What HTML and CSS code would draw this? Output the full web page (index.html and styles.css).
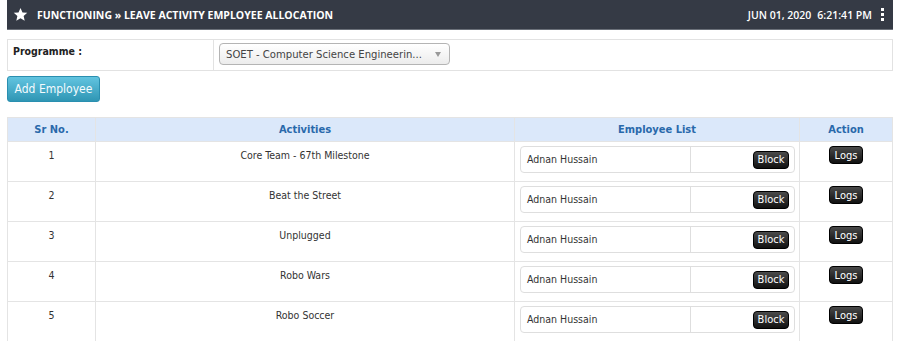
FILE: index.html
```html
<!DOCTYPE html>
<html lang="en">
<head>
    <meta charset="UTF-8">
    <title>Leave Activity Employee Allocation</title>
    <link rel="stylesheet" href="styles.css">
</head>
<body>
    <div class="topbar">
        <div class="title">
            <svg class="star" width="15" height="15" viewBox="0 0 24 24"><path d="M12 1.5l3.2 7.1 7.6.7-5.8 5.1 1.7 7.6L12 18l-6.7 4 1.7-7.6-5.8-5.1 7.6-.7z" fill="#fff"/></svg>
            <span>FUNCTIONING &raquo; LEAVE ACTIVITY EMPLOYEE ALLOCATION</span>
        </div>
        <div class="clock">
            <span>JUN 01, 2020</span>
            <span>6:21:41 PM</span>
            <span class="dots"><i></i><i></i><i></i></span>
        </div>
    </div>

    <div class="filter">
        <div class="filter-label">Programme :</div>
        <div class="filter-field">
            <div class="select">
                <span>SOET - Computer Science Engineerin...</span>
                <span class="caret"></span>
            </div>
        </div>
    </div>

    <button class="btn-add">Add Employee</button>

    <table class="grid">
        <thead>
            <tr>
                <th class="c-sr">Sr No.</th>
                <th class="c-act">Activities</th>
                <th class="c-emp">Employee List</th>
                <th class="c-action">Action</th>
            </tr>
        </thead>
        <tbody id="rows"></tbody>
    </table>

    <script>
        const activities = ["Core Team - 67th Milestone", "Beat the Street", "Unplugged", "Robo Wars", "Robo Soccer"];
        const tbody = document.getElementById('rows');
        activities.forEach((name, i) => {
            const tr = document.createElement('tr');
            tr.innerHTML = `
                <td class="c-sr">${i + 1}</td>
                <td class="c-act">${name}</td>
                <td class="c-emp">
                    <div class="emp-box">
                        <div class="emp-name">Adnan Hussain</div>
                        <div class="emp-btn"><button class="btn-dark btn-block">Block</button></div>
                    </div>
                </td>
                <td class="c-action"><button class="btn-dark">Logs</button></td>`;
            tbody.appendChild(tr);
        });
    </script>
</body>
</html>
```

FILE: styles.css
```css
body {
    margin: 0;
    padding: 0 7px;
    font-family: "DejaVu Sans Condensed", "DejaVu Sans", sans-serif;
    font-size: 10.5px;
    color: #333;
    background: #fff;
}
.topbar {
    display: flex;
    justify-content: space-between;
    align-items: center;
    height: 29px;
    background: #353a45;
    border-bottom: 1px solid #6b7079;
    color: #fff;
    padding: 0 9px 0 6px;
}
.title {
    display: flex;
    align-items: center;
    gap: 9px;
    font-family: "Open Sans", sans-serif;
    font-weight: 700;
    font-size: 10.5px;
}
.star {
    margin-top: -1px;
}
.clock {
    display: flex;
    align-items: center;
    gap: 6px;
    font-family: "Open Sans", sans-serif;
    font-size: 10.5px;
    font-weight: 600;
}
.dots {
    display: flex;
    flex-direction: column;
    gap: 2px;
    margin-left: 3px;
}
.dots i {
    display: block;
    width: 3px;
    height: 3px;
    background: #fff;
}
.filter {
    display: flex;
    margin-top: 9px;
    border: 1px solid #e2e2e2;
    height: 30px;
}
.filter-label {
    width: 200px;
    padding: 5px 0 0 5px;
    font-weight: bold;
    font-size: 10.5px;
    color: #222;
    border-right: 1px solid #e2e2e2;
}
.filter-field {
    padding: 3px 0 0 5px;
}
.select {
    display: flex;
    justify-content: space-between;
    align-items: center;
    width: 215px;
    height: 20px;
    padding: 0 8px 0 6px;
    border: 1px solid #b4b4b4;
    border-radius: 4px;
    background: linear-gradient(#fff, #ececec);
    font-size: 11.2px;
    color: #444;
    white-space: nowrap;
}
.caret {
    width: 0;
    height: 0;
    border-left: 3px solid transparent;
    border-right: 3px solid transparent;
    border-top: 5px solid #999;
}
.btn-add {
    display: block;
    margin-top: 5px;
    width: 93px;
    height: 26px;
    border: 1px solid #2a8fb0;
    border-radius: 3px;
    background: linear-gradient(#62c4e0, #2f96b4);
    color: #f4fbfe;
    font-family: "DejaVu Sans Condensed", sans-serif;
    font-size: 12px;
    padding: 0;
}
.grid {
    width: 100%;
    margin-top: 15px;
    border-collapse: collapse;
    border: 1px solid #e4e4e4;
    table-layout: fixed;
}
.grid th {
    background: #dbe8fa;
    color: #2969ab;
    font-weight: bold;
    height: 24px;
    padding: 0;
    border-left: 1px solid #e4e4e4;
    font-size: 11px;
    box-sizing: border-box;
}
.grid td {
    border: 1px solid #e4e4e4;
    text-align: center;
    vertical-align: top;
    height: 40px;
    padding: 7px 0 0;
    box-sizing: border-box;
    color: #333;
}
.c-sr { width: 88px; }
.c-act { width: 419px; }
.c-emp { width: 285px; }
.grid td.c-emp {
    padding: 4px 4px 0 5px;
}
.grid td.c-action {
    padding-top: 4px;
}
.emp-box {
    display: flex;
    border: 1px solid #dedede;
    border-radius: 4px;
    height: 25px;
    text-align: left;
}
.emp-name {
    width: 163px;
    padding: 6px 0 0 6px;
    border-right: 1px solid #dedede;
}
.emp-btn {
    flex: 1;
    display: flex;
    justify-content: flex-end;
    align-items: center;
    padding-right: 5px;
}
.btn-dark {
    background: linear-gradient(#4a4a4a, #111);
    color: #fff;
    border: 1px solid #000;
    border-radius: 4px;
    font-family: "DejaVu Sans Condensed", sans-serif;
    font-size: 11px;
    width: 34px;
    height: 18px;
    padding: 0;
    line-height: 15px;
}
.btn-block {
    width: 36px;
    height: 18px;
}
```
